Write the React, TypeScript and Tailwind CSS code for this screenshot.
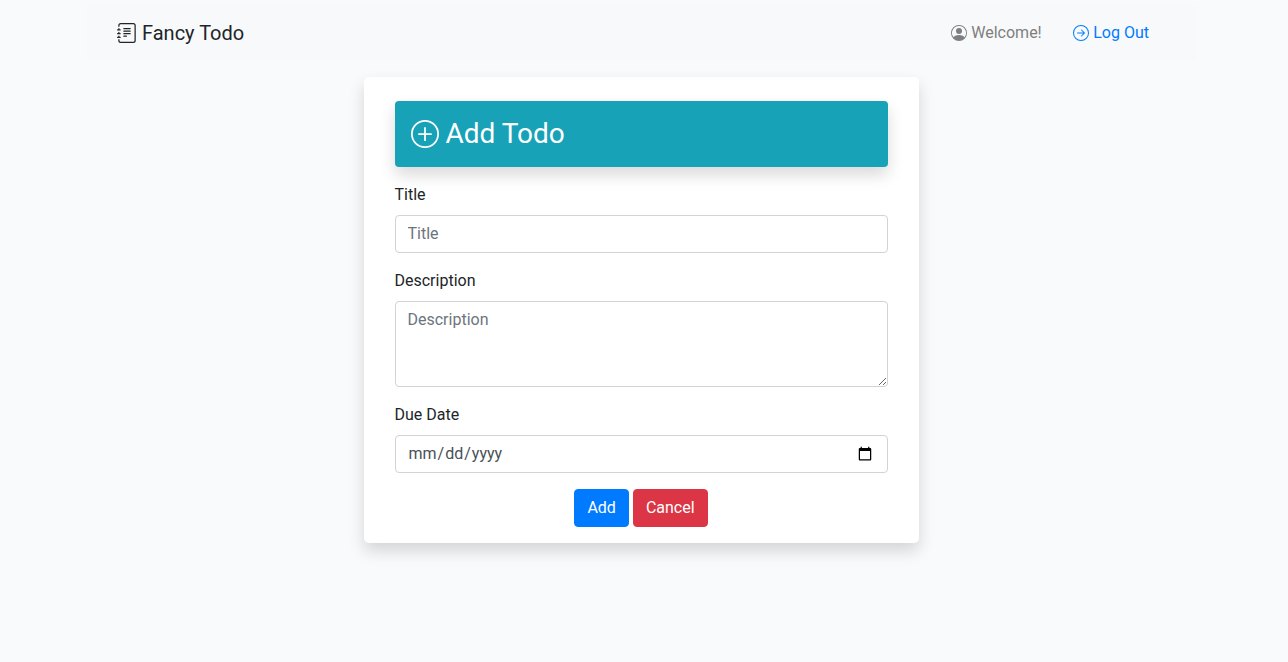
import { BsJournalText, BsPersonCircle, BsArrowRightCircle, BsPlusCircle } from 'react-icons/bs'

const inputClass =
  'block w-full rounded-[4px] border border-[#ced4da] bg-white px-3 text-base leading-6 text-[#495057] placeholder:text-[#6c757d] outline-none'

export default function App() {
  return (
    <div className="min-h-[662px] bg-[#f9fafc] pt-[5px] font-['Roboto',sans-serif] text-base text-[#212529]">
      {/* Navbar */}
      <nav className="ml-[86.5px] flex h-[55px] w-[1110px] items-center justify-between bg-[#f8f9fa] pl-[30px] pr-[47.5px]">
        <a href="#" className="flex items-center gap-[5.5px] text-[20px] leading-[30px] text-[#212529]">
          <BsJournalText className="h-5 w-5" />
          <span>Fancy Todo</span>
        </a>
        <div className="flex items-center gap-[31.5px]">
          <span className="flex items-center gap-1 text-[#7f7f7f]">
            <BsPersonCircle className="h-4 w-4" />
            Welcome!
          </span>
          <a href="#" className="flex items-center gap-1 text-[#007bff]">
            <BsArrowRightCircle className="h-4 w-4" />
            Log Out
          </a>
        </div>
      </nav>

      {/* Form card */}
      <div className="mt-[17px] ml-[363.5px] w-[555px] rounded-[5px] bg-white px-[31px] pt-6 pb-4 shadow-[0_8px_16px_rgba(0,0,0,0.15)]">
        <div className="flex h-[66px] items-center gap-[7px] rounded-[4px] bg-[#17a2b8] px-4 text-[28px] text-white shadow-[0_8px_16px_rgba(0,0,0,0.15)]">
          <BsPlusCircle className="h-7 w-7" />
          <span>Add Todo</span>
        </div>

        <form className="mt-4">
          <label className="mb-2 block leading-6">Title</label>
          <input type="text" placeholder="Title" className={`${inputClass} h-[38px] pt-[5px] pb-[7px]`} />

          <label className="mt-4 mb-2 block leading-6">Description</label>
          <textarea placeholder="Description" className={`${inputClass} h-[86px] py-1.5`} />

          <label className="mt-4 mb-2 block leading-6">Due Date</label>
          <input type="date" className={`${inputClass} h-[38px] py-1.5`} />

          <div className="mt-4 flex justify-center gap-1">
            <button type="button" className="h-[38px] rounded-[4px] border border-[#007bff] bg-[#007bff] px-3 text-white">
              Add
            </button>
            <button type="button" className="h-[38px] rounded-[4px] border border-[#dc3545] bg-[#dc3545] px-3 text-white">
              Cancel
            </button>
          </div>
        </form>
      </div>
    </div>
  )
}
